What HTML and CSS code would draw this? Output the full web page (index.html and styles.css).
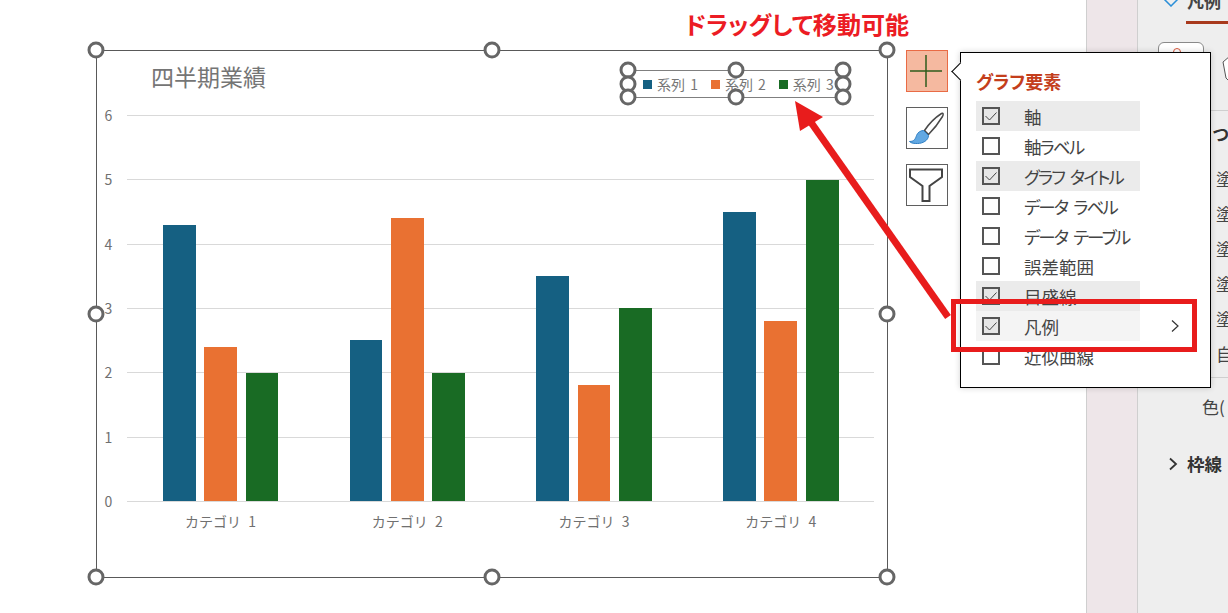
FILE: index.html
```html
<!DOCTYPE html>
<html lang="ja">
<head>
<meta charset="utf-8">
<title>グラフ要素</title>
<link rel="stylesheet" href="styles.css">
</head>
<body>
<div class="app">
  <main class="stage">
    <section class="chart">
      <h1 class="chart-title">四半期業績</h1>
      <div class="plot-row">
        <div class="y-axis">
          <span>6</span><span>5</span><span>4</span><span>3</span><span>2</span><span>1</span><span>0</span>
        </div>
        <div class="plot">
          <div class="grid-lines"><i></i><i></i><i></i><i></i><i></i><i></i><i></i></div>
          <div class="groups">
            <div class="group"><b class="bar s1" style="height:71.67%"></b><b class="bar s2" style="height:40%"></b><b class="bar s3" style="height:33.33%"></b></div>
            <div class="group"><b class="bar s1" style="height:41.67%"></b><b class="bar s2" style="height:73.33%"></b><b class="bar s3" style="height:33.33%"></b></div>
            <div class="group"><b class="bar s1" style="height:58.33%"></b><b class="bar s2" style="height:30%"></b><b class="bar s3" style="height:50%"></b></div>
            <div class="group"><b class="bar s1" style="height:75%"></b><b class="bar s2" style="height:46.67%"></b><b class="bar s3" style="height:83.33%"></b></div>
          </div>
        </div>
      </div>
      <div class="categories"><span>カテゴリ 1</span><span>カテゴリ 2</span><span>カテゴリ 3</span><span>カテゴリ 4</span></div>

      <div class="legend">
        <span class="legend-item"><i class="swatch s1"></i>系列 1</span>
        <span class="legend-item"><i class="swatch s2"></i>系列 2</span>
        <span class="legend-item"><i class="swatch s3"></i>系列 3</span>
        <i class="handle l-top l-left"></i><i class="handle l-mid l-left"></i><i class="handle l-bot l-left"></i>
        <i class="handle l-top h-center"></i><i class="handle l-bot h-center"></i>
        <i class="handle l-top h-right"></i><i class="handle l-mid h-right"></i><i class="handle l-bot h-right"></i>
      </div>

      <i class="handle c-top h-left"></i><i class="handle c-top h-center"></i><i class="handle c-top h-right"></i>
      <i class="handle c-mid h-left"></i><i class="handle c-mid h-right"></i>
      <i class="handle c-bot h-left"></i><i class="handle c-bot h-center"></i><i class="handle c-bot h-right"></i>
    </section>

    <div class="tools">
      <div class="tool tool-active">
        <svg viewBox="0 0 40 40" width="40" height="40"><path class="plus" d="M3 20H35M19 4V36"/></svg>
      </div>
      <div class="tool">
        <svg viewBox="0 0 40 40" width="40" height="40">
          <path class="brush-handle" d="M34.500 5.500C36.500 4.500 36.500 6.500 35.500 8.500C31 16 25.500 22.500 21.500 26.500L17.500 22.500C21.500 16.500 29 9 34.500 5.500Z"/>
          <path class="brush-head" d="M16.500 22.500L21.500 27.500C21.500 32.500 15.500 35.500 10.500 35.500C7.500 35.500 4.500 35.500 2.500 33.500C7.500 33.500 8.500 30.500 9.500 27.500C10.500 24.500 13.500 22.500 16.500 22.500Z"/>
        </svg>
      </div>
      <div class="tool">
        <svg viewBox="0 0 40 40" width="40" height="40"><path class="funnel" d="M3 4.500H35V12L22.500 21V36H15.500V21L3 12Z"/></svg>
      </div>
    </div>

    <aside class="popup">
      <i class="caret"></i>
      <h2 class="popup-title">グラフ要素</h2>
      <ul class="rows">
        <li class="row row-on"><span class="check checked"><svg viewBox="0 0 14 14" width="14" height="14"><path d="M1.500 7L5.500 11L12.500 3.500"/></svg></span>軸</li>
        <li class="row row-kana"><span class="check"></span>軸ラベル</li>
        <li class="row row-on row-kana"><span class="check checked"><svg viewBox="0 0 14 14" width="14" height="14"><path d="M1.500 7L5.500 11L12.500 3.500"/></svg></span>グラフ タイトル</li>
        <li class="row row-kana"><span class="check"></span>データ ラベル</li>
        <li class="row row-kana"><span class="check"></span>データ テーブル</li>
        <li class="row"><span class="check"></span>誤差範囲</li>
        <li class="row row-on"><span class="check checked"><svg viewBox="0 0 14 14" width="14" height="14"><path d="M1.500 7L5.500 11L12.500 3.500"/></svg></span>目盛線</li>
        <li class="row row-hover"><span class="check checked"><svg viewBox="0 0 14 14" width="14" height="14"><path d="M1.500 7L5.500 11L12.500 3.500"/></svg></span>凡例<svg class="row-arrow" viewBox="0 0 10 14" width="10" height="14"><path d="M2 1.500L8 7L2 12.500"/></svg></li>
        <li class="row"><span class="check"></span>近似曲線</li>
      </ul>
    </aside>

    <p class="note">ドラッグして移動可能</p>
    <div class="callout-box"></div>
    <svg class="arrow" viewBox="0 0 1228 613" width="1228" height="613"><path class="arrow-line" d="M948 317L810 121"/><path class="arrow-head" d="M795 101L823 117L800 131Z"/></svg>
  </main>

  <div class="strip"></div>

  <aside class="panel">
    <div class="panel-tab">
      <svg class="tab-icon" viewBox="0 0 16 8" width="16" height="8"><path d="M1 0L8 7L15 0"/></svg>
      <span>凡例</span>
    </div>
    <div class="tab-line"></div>
    <div class="panel-icons">
      <div class="icon-btn"><i class="icon-dot"></i></div>
      <svg class="pent" viewBox="0 0 10 30" width="10" height="30"><path d="M1 8L8 2V28L4 24Z"/></svg>
    </div>
    <div class="section-title">塗りつ</div>
    <div class="opts">
      <span>塗</span><span>塗</span><span>塗</span><span>塗</span><span>塗</span><span>自</span>
    </div>
    <div class="color-row">色(</div>
    <div class="border-row">
      <svg viewBox="0 0 10 14" width="10" height="14"><path d="M2 1.500L8 7L2 12.500"/></svg>
      <b>枠線</b>
    </div>
  </aside>
</div>
</body>
</html>
```
FILE: styles.css
```css
* { box-sizing: border-box; }
html, body { margin: 0; padding: 0; }
body {
  width: 1228px;
  height: 613px;
  overflow: hidden;
  background: #fff;
  font-family: "Noto Sans CJK JP", "Noto Sans", sans-serif;
}
h1, h2, p, ul { margin: 0; padding: 0; font-weight: normal; list-style: none; }
i, b { display: block; }

.app { display: flex; width: 1228px; height: 613px; }

/* Stage */
.stage {
  position: relative;
  z-index: 2;
  flex: 0 0 1086px;
  min-width: 0;
  display: flex;
  align-items: flex-start;
  padding: 50px 0 0 96px;
}

/* Chart */
.chart {
  position: relative;
  flex: 0 0 792px;
  height: 528px;
  border: 1px solid #595959;
  color: #707070;
}
.chart-title {
  margin: 9px 0 0 54px;
  height: 32px;
  font-size: 23px;
  line-height: 32px;
  color: #757575;
}
.plot-row { display: flex; margin-top: 23px; }
.y-axis {
  flex: 0 0 23px;
  margin-right: 7.200px;
  height: 387px;
  display: flex;
  flex-direction: column;
  justify-content: space-between;
  align-items: center;
  font-size: 14px;
}
.y-axis span { height: 1px; line-height: 1px; }
.plot { display: grid; flex: 0 0 747px; height: 387px; }
.grid-lines, .groups { grid-area: 1 / 1; }
.grid-lines { display: flex; flex-direction: column; justify-content: space-between; }
.grid-lines i { height: 1px; background: #d9d9d9; }
.groups { display: flex; height: 386px; padding-top: .5px; }
.group { flex: 1; display: flex; justify-content: center; align-items: flex-end; gap: 8.700px; }
.bar { width: 32.700px; }
.s1 { background: #156082; }
.s2 { background: #e97132; }
.s3 { background: #196b24; }
.categories {
  display: flex;
  width: 747px;
  margin: 8px 0 0 30.200px;
  font-size: 14px;
  line-height: 22px;
  word-spacing: 4px;
}
.categories span { flex: 1; text-align: center; }

/* Legend */
.legend {
  position: absolute;
  left: 531px;
  top: 19px;
  width: 215px;
  height: 28px;
  display: flex;
  align-items: center;
  padding-left: 15px;
  gap: 13px;
  border-top: 1px solid #7f7f7f;
  border-bottom: 1px solid #7f7f7f;
  font-size: 14px;
  color: #777;
  word-spacing: 2px;
}
.legend-item { display: flex; align-items: center; gap: 5px; white-space: nowrap; }
.swatch { width: 9px; height: 9px; }

/* Handles */
.handle {
  position: absolute;
  width: 17px;
  height: 17px;
  border: 3px solid #666;
  border-radius: 50%;
  background: #fff;
  transform: translate(-50%, -50%);
}
.h-left { left: -1px; }
.l-left { left: 0; }
.h-center { left: 50%; }
.h-right { left: 100%; }
.c-top { top: -1px; }
.c-mid { top: 50%; }
.c-bot { top: 100%; }
.l-top { top: -1px; }
.l-mid { top: 50%; }
.l-bot { top: 100%; }

/* Tools */
.tools { flex: 0 0 42px; margin-left: 18px; display: flex; flex-direction: column; gap: 15px; }
.tool { width: 42px; height: 42px; border: 1px solid #5f5f5f; background: #fff; }
.tool svg { display: block; }
.tool-active { background: #f5b9a0; border-color: #e96b45; }
.plus { fill: none; stroke: #2f5c1c; stroke-width: 1.500; }
.brush-handle { fill: #fff; stroke: #4a4a4a; stroke-width: 1.500; }
.brush-head { fill: #62a8e2; stroke: #2f7fc4; stroke-width: 1; }
.funnel { fill: #fff; stroke: #444; stroke-width: 2; }

/* Popup */
.popup {
  position: relative;
  flex: 0 0 251px;
  height: 336px;
  margin: 2px 0 0 12px;
  padding: 0 0 0 15px;
  background: #fff;
  border: 1px solid #000;
  box-shadow: 0 0 6px rgba(0, 0, 0, .18);
}
.caret {
  position: absolute;
  left: -7px;
  top: 12px;
  width: 13px;
  height: 13px;
  background: #fff;
  border-left: 1px solid #000;
  border-bottom: 1px solid #000;
  transform: rotate(45deg);
}
.popup-title {
  height: 48px;
  padding-top: 16px;
  font-size: 18px;
  line-height: 24px;
  font-weight: 700;
  color: #c43e1c;
  font-feature-settings: "palt";
}
.rows { width: 164px; }
.row {
  position: relative;
  display: flex;
  align-items: center;
  height: 30px;
  padding-left: 6px;
  font-size: 17.500px;
  color: #444;
  white-space: nowrap;
  font-feature-settings: "palt";
}
.row-kana { letter-spacing: -1.900px; word-spacing: 4px; }
.row-on { background: #ebebeb; }
.row-hover { background: #f4f4f4; }
.check {
  flex: 0 0 18px;
  width: 18px;
  height: 18px;
  margin-right: 24px;
  border: 2px solid #555;
  background: #fff;
}
.checked { background: #e6e6e6; }
.check svg { display: block; fill: none; stroke: #444; stroke-width: 1; }
.row-arrow { position: absolute; left: 194px; top: 8px; fill: none; stroke: #333; stroke-width: 1.200; }

/* Annotations */
.note {
  position: absolute;
  left: 685px;
  top: 8px;
  font-size: 24.100px;
  line-height: 32px;
  font-weight: 700;
  color: #ec1c24;
  white-space: nowrap;
  font-feature-settings: "palt";
}
.callout-box {
  position: absolute;
  left: 951px;
  top: 299px;
  width: 246px;
  height: 53px;
  border: 5.500px solid #e81c1c;
}
.arrow { position: absolute; left: 0; top: 0; pointer-events: none; }
.arrow-line { fill: none; stroke: #e81c1c; stroke-width: 7; }
.arrow-head { fill: #e81c1c; }

/* Side strip */
.strip {
  flex: 0 0 52px;
  background: #eee6e9;
  border-left: 1px solid #cfcfcf;
  border-right: 1px solid #cfcfcf;
  height: 613px;
}

/* Panel */
.panel {
  flex: 0 0 90px;
  height: 613px;
  overflow: hidden;
  background: #eeeeee;
  color: #444;
  white-space: nowrap;
}
.panel-tab {
  display: flex;
  align-items: center;
  gap: 8px;
  height: 22px;
  margin: -11px 0 0 25px;
  font-size: 17px;
  font-weight: 700;
}
.tab-icon { flex: none; margin-top: 6px; fill: none; stroke: #2b8fd8; stroke-width: 1.500; }
.tab-line { height: 3px; margin: 10px 0 0 48px; background: #a8391c; }
.panel-icons {
  display: flex;
  align-items: flex-start;
  height: 68px;
  margin: 18px 0 0 20px;
}
.icon-btn {
  position: relative;
  flex: 0 0 46px;
  height: 50px;
  border: 1px solid #8a8a8a;
  border-radius: 6px;
  background: #fff;
}
.icon-dot {
  width: 8px;
  height: 8px;
  margin: 5px 0 0 14px;
  border: 1.500px solid #d8553a;
  border-radius: 50%;
}
.pent { flex: none; margin: 12px 0 0 18px; fill: #fff; stroke: #555; stroke-width: 1; }
.section-title {
  border-top: 1px solid #cfcfcf;
  padding: 11px 0 0 40px;
  font-size: 17px;
  line-height: 24px;
  font-weight: 700;
  color: #333;
}
.opts {
  display: flex;
  flex-direction: column;
  padding: 15px 0 0 78px;
  font-size: 17px;
  line-height: 35px;
  border-bottom: 1px solid #cfcfcf;
  height: 232px;
}
.color-row { padding: 17px 0 0 64px; font-size: 17px; line-height: 24px; }
.border-row { display: flex; align-items: center; gap: 9px; margin: 33px 0 0 30px; font-size: 17.500px; line-height: 24px; color: #333; }
.border-row svg { fill: none; stroke: #333; stroke-width: 1.800; }
```
